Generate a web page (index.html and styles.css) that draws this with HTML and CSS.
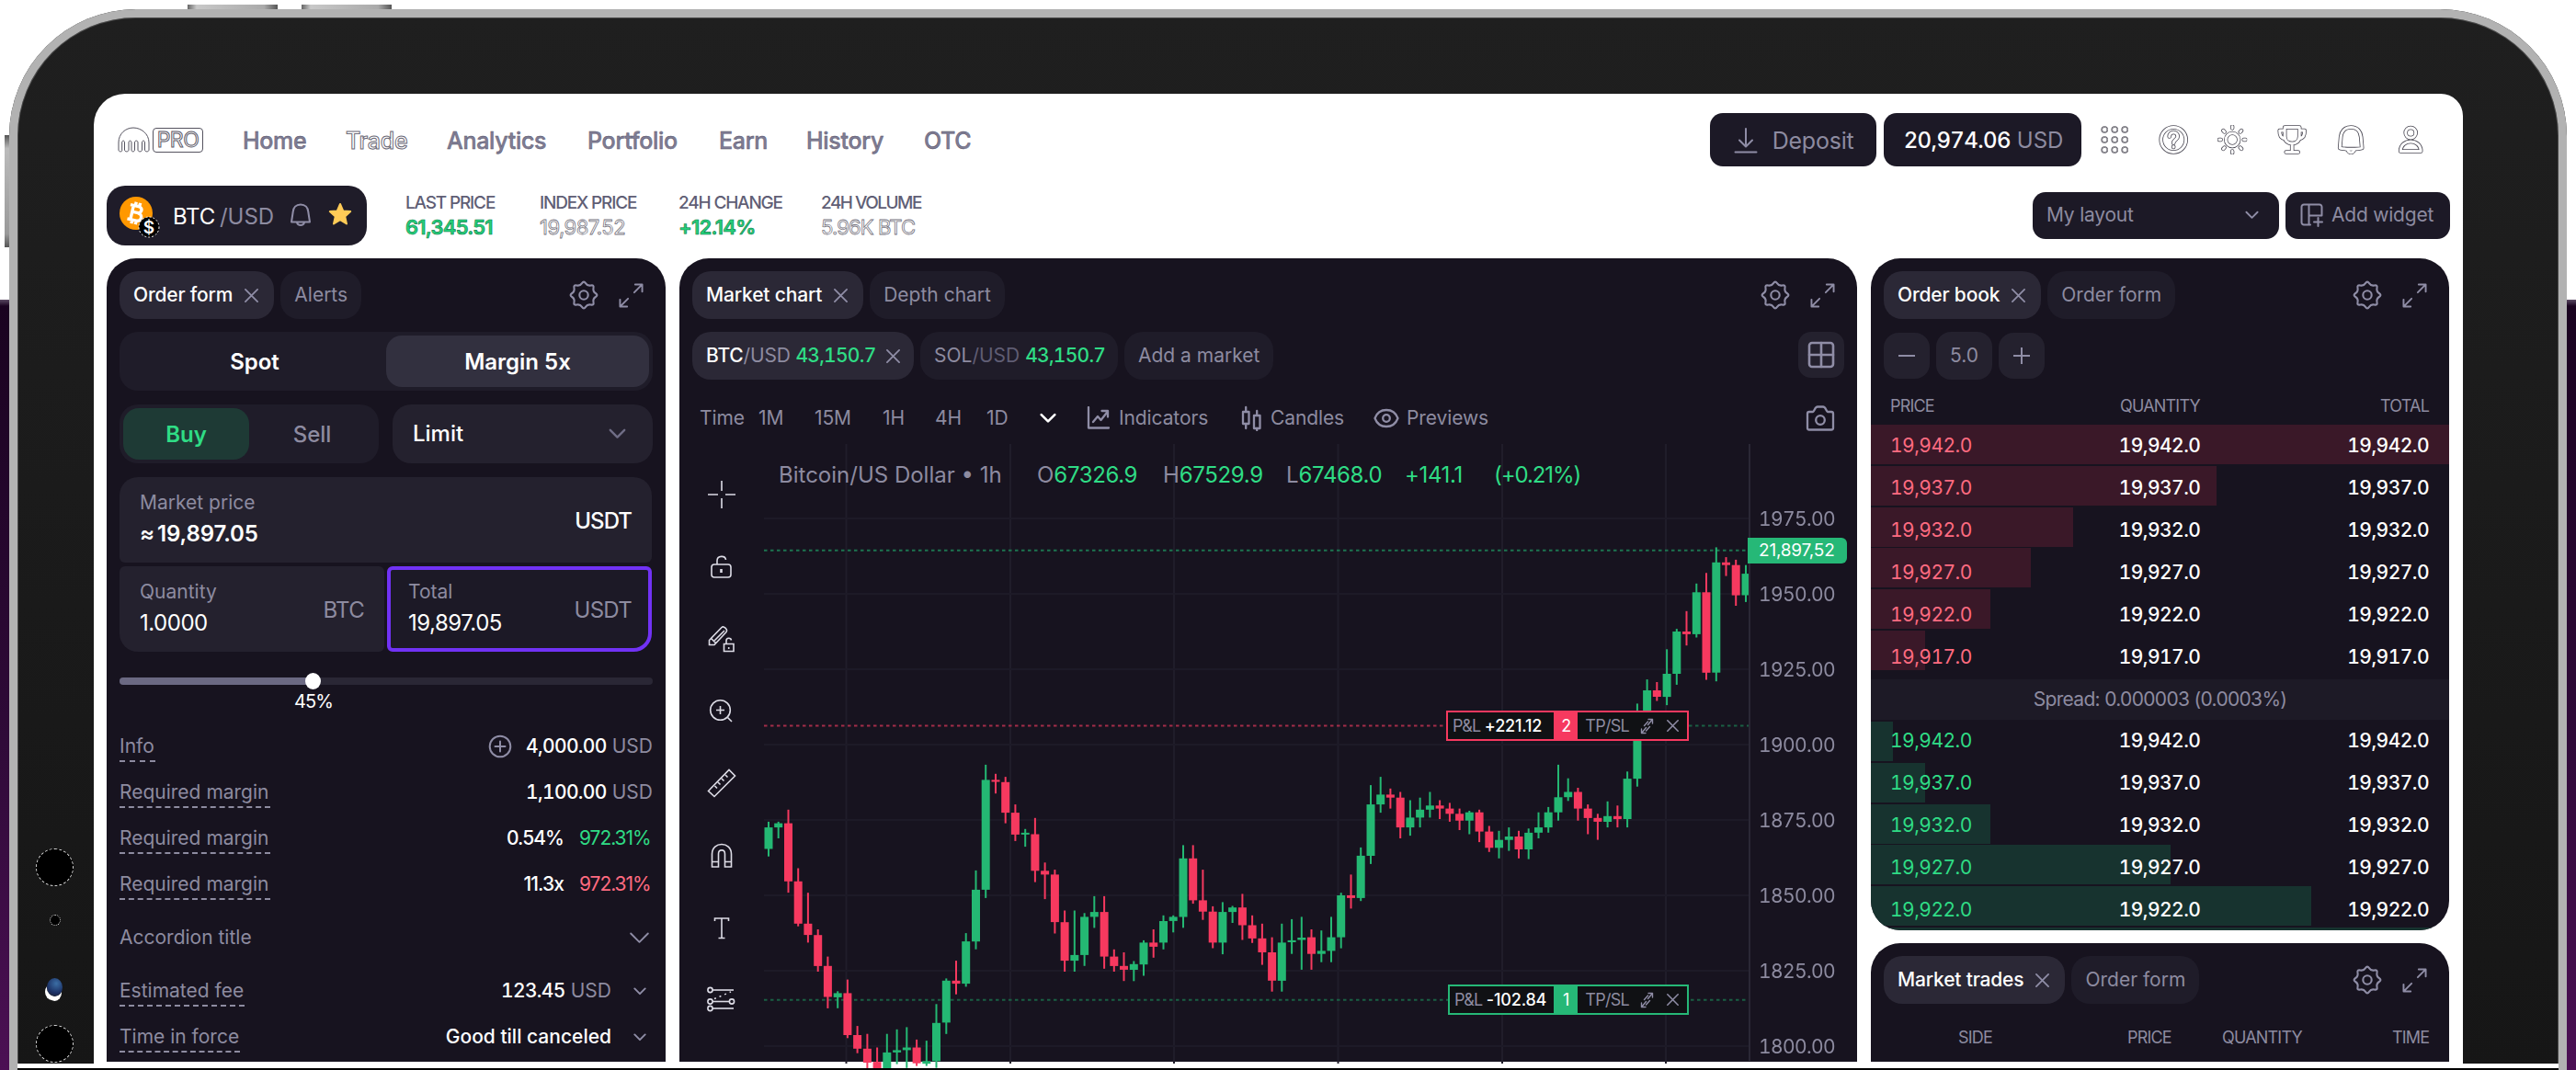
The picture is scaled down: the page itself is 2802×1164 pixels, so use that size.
FILE: index.html
```html
<!DOCTYPE html>
<html lang="en">
<head>
<meta charset="utf-8">
<title>Kraken Pro</title>
<link rel="stylesheet" href="styles.css">
</head>
<body>
<svg class="defs" aria-hidden="true">
  <symbol id="gear" viewBox="0 0 32 32"><path d="M28.85 18Q25.7 20 26.5 23.65Q27.3 27.3 23.65 26.5Q20 25.7 18 28.85Q16 32 14 28.85Q12 25.7 8.35 26.5Q4.7 27.3 5.5 23.65Q6.3 20 3.15 18Q0 16 3.15 14Q6.3 12 5.5 8.35Q4.7 4.7 8.35 5.5Q12 6.3 14 3.15Q16 0 18 3.15Q20 6.3 23.65 5.5Q27.3 4.7 26.5 8.35Q25.7 12 28.85 14Q32 16 28.85 18Z"/><circle cx="16" cy="16" r="4.7"/></symbol>
  <symbol id="expand" viewBox="0 0 28 28"><path d="M17.5 10.5 26 2M18.5 1.5h8v8M10.500 17.500 2 26M1.500 18.500v8h8"/></symbol>
  <symbol id="close" viewBox="0 0 16 16"><path d="M1 1l14 14M15 1 1 15"/></symbol>
  <symbol id="chev" viewBox="0 0 16 10"><path d="M1.500 1.500 8 8l6.500-6.500"/></symbol>
  <symbol id="grid9" viewBox="0 0 32 32"><circle cx="5" cy="5" r="3"/><circle cx="16" cy="5" r="3"/><circle cx="27" cy="5" r="3"/><circle cx="5" cy="16" r="3"/><circle cx="16" cy="16" r="3"/><circle cx="27" cy="16" r="3"/><circle cx="5" cy="27" r="3"/><circle cx="16" cy="27" r="3"/><circle cx="27" cy="27" r="3"/></symbol>
  <symbol id="help" viewBox="0 0 32 32"><circle cx="16" cy="16" r="13.500"/><path d="M11.500 12.500c0-6 9-6 9 0 0 3.500-4.500 3.500-4.500 7"/><path d="M16 23.500v.4"/></symbol>
  <symbol id="sun" viewBox="0 0 34 34"><circle cx="17" cy="17" r="7.500"/><path d="M17 1.800v2M17 30.200v2M1.800 17h2M30.200 17h2M6.500 6.500l1.400 1.400M26.100 26.100l1.400 1.400M6.500 27.500l1.400-1.400M26.100 7.900l1.400-1.400"/></symbol>
  <symbol id="trophy" viewBox="0 0 32 32"><path d="M8 2.500h16v10c0 10-16 10-16 0zM8 6H2.500c0 6 1.500 8 6 9M24 6h5.500c0 6-1.500 8-6 9M16 20.500V29M9.500 29.500h13"/></symbol>
  <symbol id="bellbig" viewBox="0 0 32 32"><path d="M12.500 27c1.500 4 5.500 4 7 0"/><path d="M16 2.500c-7 0-10.500 5-11 10.500L4 25c3 1.500 21 1.500 24 0L27 13c-.500-5.500-4-10.500-11-10.500z"/></symbol>
  <symbol id="user" viewBox="0 0 32 32"><circle cx="16" cy="8.500" r="5.500"/><path d="M5 28.500c0-14 22-14 22 0z"/></symbol>
</svg>

<div class="device">
  <i class="key key-a"></i><i class="key key-b"></i><i class="key key-side"></i>
  <div class="bezel">
    <i class="cam cam-1"></i><i class="cam cam-2"></i><i class="lens"></i><i class="cam cam-3"></i>
    <div class="screen">

      <header class="top">
        <div class="logo">
          <svg width="35" height="28" viewBox="0 0 35 28"><path class="ghost" d="M1 25V17C1 7.500 8.500 1 17 1s17 6.500 17 16v8c0 2.500-4.500 2.500-4.500 0v-8c0-2.500-3-2.500-3 0v8c0 2.500-4.500 2.500-4.500 0v-8c0-2.500-3.500-2.500-3.500 0v8c0 2.500-3.500 2.500-3.500 0v-8c0-2.500-3-2.500-3 0v8c0 2.500-4.500 2.500-4.500 0v-8c0-2.500-2.800-2.500-2.800 0v8C5.500 27.500 1 27.500 1 25z"/></svg>
          <span class="pro outline">PRO</span>
        </div>
        <nav class="nav">
          <a class="n1">Home</a><a class="n2 outline">Trade</a><a class="n3">Analytics</a><a class="n4">Portfolio</a><a class="n5">Earn</a><a class="n6">History</a><a>OTC</a>
        </nav>
        <div class="actions">
          <button class="btn deposit"><svg class="ic" width="26" height="28" viewBox="0 0 26 28"><path d="M13 1v19M6 13.500l7 7 7-7M1.500 26.500h23"/></svg>Deposit</button>
          <button class="btn balance"><b class="num">20,974.06</b> USD</button>
          <div class="icons">
            <svg><use href="#grid9" class="o1 thin"/><use href="#grid9" class="o2 thin2"/></svg>
            <svg><use href="#help" class="o1"/><use href="#help" class="o2"/></svg>
            <svg class="sunny"><use href="#sun" class="o1"/><use href="#sun" class="o2"/></svg>
            <svg><use href="#trophy" class="o1"/><use href="#trophy" class="o2"/></svg>
            <svg><use href="#bellbig" class="o1"/><use href="#bellbig" class="o2"/></svg>
            <svg><use href="#user" class="o1"/><use href="#user" class="o2"/></svg>
          </div>
        </div>
      </header>

      <div class="market">
        <div class="pair">
          <svg class="coin" width="48" height="48" viewBox="0 0 48 48"><circle cx="19" cy="19" r="18" fill="#ff9800"/><g transform="rotate(13 19 19)" fill="none" stroke="#fff" stroke-width="3.400"><path d="M14.500 11v16M11 11.200h9c5.500 0 5.500 7 0 7h-5M11 26.800h10c6 0 6-8.300 0-8.300M16.500 7v4M21 7v4M16.500 27v4M21 27v4"/></g><circle cx="33" cy="34" r="11" fill="#000" stroke="#fff" stroke-width="1" stroke-dasharray="2 2"/><text x="33" y="40.500" text-anchor="middle">$</text></svg>
          <span class="base">BTC</span><span class="quote">/USD</span>
          <svg class="ic bell" width="24" height="26" viewBox="0 0 24 26"><path d="M12 1.500c-5 0-8 3.500-8.300 8L2 20.500h20L20.300 9.500c-.300-4.500-3.300-8-8.300-8zM8 21c1 4 7 4 8 0"/></svg>
          <svg class="star" width="26" height="26" viewBox="0 0 26 26"><path d="M13 2l3.200 7.400 8 .700-6 5.400 1.800 7.900-7-4.200-7 4.200 1.800-7.900-6-5.400 8-.700z" fill="#ffcb57" stroke="#ffcb57" stroke-width="2" stroke-linejoin="round"/></svg>
        </div>
        <dl class="stats">
          <div class="s1"><dt>LAST PRICE</dt><dd class="up">61,345.51</dd></div>
          <div class="s2"><dt>INDEX PRICE</dt><dd class="outline">19,987.52</dd></div>
          <div class="s3"><dt>24H CHANGE</dt><dd class="up">+12.14%</dd></div>
          <div class="s4"><dt>24H VOLUME</dt><dd class="outline">5.96K BTC</dd></div>
        </dl>
        <div class="layouts">
          <button class="btn layout">My layout<svg class="ic" width="15" height="10"><use href="#chev"/></svg></button>
          <button class="btn widget"><svg class="ic" width="26" height="26" viewBox="0 0 26 26"><path d="M11 23.500H4a2.500 2.500 0 0 1-2.500-2.500V4A2.500 2.500 0 0 1 4 1.500h17A2.500 2.500 0 0 1 23.500 4v9.500H9.500M9.500 1.500v22M19.500 16v9M15 20.500h9"/></svg>Add widget</button>
        </div>
      </div>

      <main class="board">
        <section class="panel order">
          <div class="tabs"><span class="tab on">Order form<svg class="ic x"><use href="#close"/></svg></span><span class="tab">Alerts</span><span class="tools"><svg class="ic g"><use href="#gear"/></svg><svg class="ic e"><use href="#expand"/></svg></span></div>
          <div class="seg"><span>Spot</span><span class="on">Margin 5x</span></div>
          <div class="pairrow"><div class="seg side"><span class="buy">Buy</span><span class="sell">Sell</span></div><div class="select">Limit<svg class="ic" width="19" height="12"><use href="#chev"/></svg></div></div>
          <div class="fields">
            <div class="field wide"><div><label>Market price</label><strong>≈ 19,897.05</strong></div><em class="lit">USDT</em></div>
            <div class="field qty"><div><label>Quantity</label><span class="val">1.0000</span></div><em>BTC</em></div>
            <div class="field total"><div><label>Total</label><span class="val">19,897.05</span></div><em>USDT</em></div>
          </div>
          <div class="slider"><i class="fill" style="width:36%"></i><i class="thumb" style="left:36.200%"></i><span class="pct" style="left:36.200%">45%</span></div>
          <ul class="info">
            <li><u>Info</u><span class="v"><svg class="ic plus" width="26" height="26" viewBox="0 0 26 26"><circle cx="13" cy="13" r="11.300"/><path d="M13 7.500v11M7.500 13h11"/></svg><b class="num">4,000.00</b> USD</span></li>
            <li><u>Required margin</u><span class="v"><b class="num">1,100.00</b> USD</span></li>
            <li><u>Required margin</u><span class="v"><b class="pc">0.54%</b><span class="pc green">972.31%</span></span></li>
            <li><u>Required margin</u><span class="v"><b class="pc">11.3x</b><span class="pc red">972.31%</span></span></li>
            <li class="acc">Accordion title<svg class="ic" width="23" height="15"><use href="#chev"/></svg></li>
            <li><u>Estimated fee</u><span class="v sm"><b class="num">123.45</b> USD<svg class="ic" width="14" height="9"><use href="#chev"/></svg></span></li>
            <li><u>Time in force</u><span class="v sm"><b>Good till canceled</b><svg class="ic" width="14" height="9"><use href="#chev"/></svg></span></li>
          </ul>
        </section>

        <section class="panel chartpanel">
          <div class="tabs"><span class="tab on">Market chart<svg class="ic x"><use href="#close"/></svg></span><span class="tab">Depth chart</span><span class="tools"><svg class="ic g"><use href="#gear"/></svg><svg class="ic e"><use href="#expand"/></svg></span></div>
          <div class="tabs second">
            <span class="tab on m1"><span><b>BTC</b>/USD <i class="green num">43,150.7</i></span><svg class="ic x"><use href="#close"/></svg></span>
            <span class="tab m2"><span>SOL<s>/USD</s> <i class="green num">43,150.7</i></span></span>
            <span class="tab m3">Add a market</span>
            <span class="gridbtn"><svg class="ic" width="30" height="30" viewBox="0 0 30 30"><rect x="2" y="2" width="26" height="26" rx="3"/><path d="M15 2v26M2 15h26"/></svg></span>
          </div>
          <div class="bar">
            <span class="t0">Time</span><span class="t1">1M</span><span class="t2">15M</span><span class="t3">1H</span><span class="t4">4H</span><span class="t5">1D</span>
            <svg class="ic white" width="18" height="12"><use href="#chev"/></svg>
            <span class="i1"><svg class="ic" width="26" height="26" viewBox="0 0 26 26"><path d="M2 1v22.500h22M7 17l5-6 3.500 4L23 5.500M16.500 5H23v6.500"/></svg>Indicators</span>
            <span class="i2"><svg class="ic" width="24" height="28" viewBox="0 0 24 28"><rect x="2" y="7" width="6.500" height="13"/><path d="M5.200 2v5M5.200 20v5"/><rect x="14" y="11" width="6.500" height="14"/><path d="M17.200 6v5M17.200 25v2"/></svg>Candles</span>
            <span class="i3"><svg class="ic" width="28" height="22" viewBox="0 0 28 22"><path d="M1.500 11C6-1 22-1 26.500 11 22 23 6 23 1.500 11z"/><circle cx="14" cy="11" r="3.800"/></svg>Previews</span>
            <svg class="ic camera" width="32" height="30" viewBox="0 0 32 30"><path d="M2 10a2 2 0 0 1 2-2h4c2-1 2-5.500 5-5.500h6c3 0 3 4.500 5 5.500h4a2 2 0 0 1 2 2v15.500a2 2 0 0 1-2 2H4a2 2 0 0 1-2-2z"/><circle cx="16" cy="17" r="4.800"/></svg>
          </div>
          <div class="chart">
            <div class="draw">
              <svg width="34" height="34" viewBox="0 0 34 34"><path d="M17 2v11M17 21v11M2 17h11M21 17h11"/></svg>
              <svg width="34" height="34" viewBox="0 0 34 34"><rect x="6" y="14" width="21" height="14" rx="3"/><path d="M12 14v-4c0-6 9-6 9.500-1"/><path d="M16.500 19v4" stroke-width="2.600"/></svg>
              <svg width="34" height="34" viewBox="0 0 34 34"><path d="M3.500 23.500v-5L17 4.500c2-2 7 2 5 5L9 23.500zM6 17l5 5M8 20 20 8M19.500 22.500h10.500v8H19.500zM22 22v-3c0-3.500 5-3.500 5.500-.500M24.700 26v2"/></svg>
              <svg width="34" height="34" viewBox="0 0 34 34"><circle cx="15.500" cy="15.500" r="10.800"/><path d="M23.500 23.500l4.500 4.500M15.500 11v9M11 15.500h9"/></svg>
              <svg width="34" height="34" viewBox="0 0 34 34"><path d="M2.500 25.500 25 2.500l6.500 6.500L9 31.500zM9.500 20l2.500 2.500M13 16l2.500 2.500M17 12l2.500 2.500M21 8l2.500 2.500"/></svg>
              <svg width="34" height="34" viewBox="0 0 34 34"><path d="M6.500 29V15c0-14 21-14 21 0v14h-7V15c0-5.500-7-5.500-7 0v14zM6.500 23.500h7M20.500 23.500h7"/></svg>
              <svg width="34" height="34" viewBox="0 0 34 34"><path d="M9.500 9V6h15v3M17 6v21M13.500 27.500h7"/></svg>
              <svg width="34" height="34" viewBox="0 0 34 34"><circle cx="4.500" cy="6" r="2.600"/><path d="M7 6h23"/><circle cx="4.500" cy="18.500" r="2.600"/><path d="M7 18.500h18"/><circle cx="28" cy="18.500" r="2.600"/><circle cx="4.500" cy="26" r="2.600"/><path d="M7 26h23"/><path d="M9 15.500 27 8" stroke-dasharray="2 4"/></svg>
            </div>
            <svg class="plot" id="plot" width="1072" height="680" viewBox="0 0 1072 680"></svg>
            <ol class="axis"><li>1975.00</li><li>1950.00</li><li>1925.00</li><li>1900.00</li><li>1875.00</li><li>1850.00</li><li>1825.00</li><li>1800.00</li></ol>
            <div class="ohlc"><span class="h0">Bitcoin/US Dollar • 1h</span><span class="h1">O<b>67326.9</b></span><span class="h2">H<b>67529.9</b></span><span class="h3">L<b>67468.0</b></span><span class="h4"><b>+141.1</b></span><span class="h5"><b>(+0.21%)</b></span></div>
            <span class="pricetag">21,897,52</span>
            <div class="pos loss"><span class="pl">P&amp;L <b>+221.12</b></span><span class="cnt">2</span><span class="tp">TP/SL</span><svg class="ic" width="15" height="18" viewBox="0 0 15 18"><path d="M9 1.500h4.500V6M13 2 8.500 7.500M6 16.500H1.500V12M2 16l4.500-5.500M4.500 8.500 8.500 4M6.500 14l4-4.500"/></svg><svg class="ic" width="13" height="13"><use href="#close"/></svg></div>
            <div class="pos gain"><span class="pl">P&amp;L <b>-102.84</b></span><span class="cnt">1</span><span class="tp">TP/SL</span><svg class="ic" width="15" height="18" viewBox="0 0 15 18"><path d="M9 1.500h4.500V6M13 2 8.500 7.500M6 16.500H1.500V12M2 16l4.500-5.500M4.500 8.500 8.500 4M6.500 14l4-4.500"/></svg><svg class="ic" width="13" height="13"><use href="#close"/></svg></div>
          </div>
        </section>

        <div class="right">
          <section class="panel book">
            <div class="tabs"><span class="tab on">Order book<svg class="ic x"><use href="#close"/></svg></span><span class="tab">Order form</span><span class="tools"><svg class="ic g"><use href="#gear"/></svg><svg class="ic e"><use href="#expand"/></svg></span></div>
            <div class="step"><span class="sb"><svg class="ic" width="18" height="18" viewBox="0 0 18 18"><path d="M0 9h18"/></svg></span><span class="sv">5.0</span><span class="sb"><svg class="ic" width="18" height="18" viewBox="0 0 18 18"><path d="M0 9h18M9 0v18"/></svg></span></div>
            <div class="cols"><span>PRICE</span><span>QUANTITY</span><span>TOTAL</span></div>
            <div class="side asks">
              <div class="depth"><i style="width:631px"></i><i style="width:376px"></i><i style="width:220px"></i><i style="width:174px"></i><i style="width:130px"></i><i style="width:59px"></i></div>
              <div class="rows">
                <p><b>19,942.0</b><span>19,942.0</span><span>19,942.0</span></p>
                <p><b>19,937.0</b><span>19,937.0</span><span>19,937.0</span></p>
                <p><b>19,932.0</b><span>19,932.0</span><span>19,932.0</span></p>
                <p><b>19,927.0</b><span>19,927.0</span><span>19,927.0</span></p>
                <p><b>19,922.0</b><span>19,922.0</span><span>19,922.0</span></p>
                <p><b>19,917.0</b><span>19,917.0</span><span>19,917.0</span></p>
              </div>
            </div>
            <div class="spread">Spread: 0.000003 (0.0003%)</div>
            <div class="side bids">
              <div class="depth"><i style="width:24px"></i><i style="width:59px"></i><i style="width:130px"></i><i style="width:326px"></i><i style="width:479px"></i><i style="width:631px"></i></div>
              <div class="rows">
                <p><b>19,942.0</b><span>19,942.0</span><span>19,942.0</span></p>
                <p><b>19,937.0</b><span>19,937.0</span><span>19,937.0</span></p>
                <p><b>19,932.0</b><span>19,932.0</span><span>19,932.0</span></p>
                <p><b>19,927.0</b><span>19,927.0</span><span>19,927.0</span></p>
                <p><b>19,922.0</b><span>19,922.0</span><span>19,922.0</span></p>
              </div>
            </div>
          </section>
          <section class="panel trades">
            <div class="tabs"><span class="tab on">Market trades<svg class="ic x"><use href="#close"/></svg></span><span class="tab">Order form</span><span class="tools"><svg class="ic g"><use href="#gear"/></svg><svg class="ic e"><use href="#expand"/></svg></span></div>
            <div class="tcols"><span>SIDE</span><span>PRICE</span><span>QUANTITY</span><span>TIME</span></div>
          </section>
        </div>
      </main>
    </div>
  </div>
</div>
<div class="edge"></div>
<script src="chart.js"></script>
</body>
</html>
```
FILE: styles.css
```css
* { box-sizing: border-box; }
html { overflow: hidden; }
body {
  margin: 0; width: 2802px; height: 1164px; overflow: hidden; position: relative;
  font: 400 21px/26px Inter, "Liberation Sans", sans-serif; color: #8d8ba0;
  background: linear-gradient(#fff 326px, #5b4a63 326px, #1a0320 333px, #2f0a38 800px, #4c1054 1164px);
}
ul, ol, dl, dd, p { margin: 0; padding: 0; list-style: none; }
b, strong, em, i { font-style: normal; font-weight: 500; }
button { font: inherit; color: inherit; border: 0; }
s, u { text-decoration: none; }
.defs { position: absolute; width: 0; height: 0; }
.ic { fill: none; stroke: #8f8da6; stroke-width: 2; stroke-linecap: round; stroke-linejoin: round; flex: none; }
.ic.white { stroke: #fff; stroke-width: 2.800; }
.green { color: #2fdc85; }
.red { color: #ff6b80; }
.num { letter-spacing: -.035em; font-variant-numeric: tabular-nums; }

/* tablet shell */
.device { position: relative; margin: 0 10px; padding-top: 10px; height: 1164px; }
.key { position: absolute; background: linear-gradient(90deg, #666, #c8c8c8 10%, #aaa 85%, #555); }
.key-a, .key-b { top: 5px; width: 98px; height: 8px; }
.key-a { left: 194px; }
.key-b { left: 318px; }
.key-side { left: -5px; top: 147px; width: 10px; height: 122px; background: linear-gradient(#555, #bbb 12%, #999 88%, #555); }
.bezel {
  position: relative; height: 1154px; padding: 83px 104px 0 83px; background: linear-gradient(#1f1f1f, #161616 1150px);
  border: 9px solid #b2b2b2; border-bottom: 0; border-radius: 138px 138px 0 0; box-shadow: inset 0 0 0 1px #4a4a4a;
  filter: drop-shadow(0 0 .6px #222);
}
.cam, .lens { position: absolute; border-radius: 50%; background: #000; }
.cam { border: 1px dashed #ddd; }
.cam-1 { left: 20px; top: 904px; width: 41px; height: 41px; }
.cam-2 { left: 35px; top: 976px; width: 12px; height: 12px; border-style: dotted; }
.cam-3 { left: 20px; top: 1096px; width: 41px; height: 41px; }
.lens { left: 32px; top: 1045px; width: 17px; height: 20px; background: radial-gradient(circle at 60% 30%, #3b6ea5, #1b2f63 60%, #222); box-shadow: -3px 5px 0 -1px #fff, 0 6px 0 -1px #fff; }
.screen { height: 1062px; background: #fff; border-radius: 34px 24px 0 0; padding: 21px 14px 0; }
.edge { position: absolute; left: 19px; right: 19px; top: 1157px; height: 7px; background: #fff; border-bottom: 2px solid #000; z-index: 2; clip-path: polygon(0 0, 83px 0, 83px 5px, 2660px 5px, 2660px 0, 100% 0, 100% 100%, 0 100%); }

/* header */
.top { display: flex; align-items: center; height: 58px; font-size: 25px; }
.logo { display: flex; width: 148px; padding-left: 12px; gap: 3px; align-items: center; }
.ghost { fill: #fff; stroke: #55535f; stroke-width: 1; }
.outline { color: #fff; -webkit-text-stroke: 1px #5d5b68; }
.pro { border: 1px solid #55535f; border-radius: 4px; height: 27px; width: 55px; font-size: 23px; line-height: 25px; text-align: center; letter-spacing: -.02em; }
.nav { display: flex; font-weight: 500; letter-spacing: -.012em; color: #7f7d94; -webkit-text-stroke: .4px #4d4b62; padding-top: 2px; }
.nav .outline { -webkit-text-stroke: 1px #6d6b78; }
.n1 { width: 112px; } .n2 { width: 110px; } .n3 { width: 153px; } .n4 { width: 143px; } .n5 { width: 95px; } .n6 { width: 128px; }
.actions { margin-left: auto; display: flex; gap: 8px; align-items: center; }
.btn { background: #1c1926; border-radius: 14px; display: flex; align-items: center; white-space: pre; padding: 0; }
.deposit { width: 181px; height: 58px; padding: 2px 0 0 26px; gap: 16px; letter-spacing: -.008em; }
.balance { width: 215px; height: 58px; padding: 2px 0 0 22px; font-size: 24px; }
.balance b { color: #fff; letter-spacing: -.025em; }
.icons { display: flex; gap: 32px; margin: 0 27px 0 12px; }
.icons svg { width: 32.400px; height: 32px; overflow: visible; fill: none; stroke-linecap: round; stroke-linejoin: round; }
.o1 { stroke: #4c4a55; stroke-width: 4.600; }
.o2 { stroke: #fff; stroke-width: 3; }
.thin { stroke-width: 1.600; }
.thin2 { stroke-width: .4; }

/* market strip */
.market { display: flex; height: 65px; margin-top: 21px; align-items: center; }
.pair { display: flex; align-items: center; width: 283px; height: 65px; border-radius: 20px; background: #1f1c29; font-size: 24px; padding: 3px 0 0 13px; }
.coin { margin-top: 2px; }
.coin text { font: 600 19px Inter, sans-serif; fill: #fff; }
.base { color: #fff; margin-left: 11px; letter-spacing: -.01em; }
.quote { margin-left: 5px; width: 76px; }
.bell { margin-top: -4px; }
.star { margin: -6px 0 0 18px; }
.stats { display: flex; margin-left: 42px; }
.stats dt { font: 500 19px/22px Inter, sans-serif; letter-spacing: -.062em; color: #605e75; }
.stats .s4 dt { letter-spacing: -.08em; }
.stats dd { font: 600 22px/26px Inter, sans-serif; letter-spacing: -.035em; margin-top: 2px; }
.stats .outline { font-weight: 400; -webkit-text-stroke: .8px #77757f; letter-spacing: -.025em; }
.stats .s4 .outline { letter-spacing: -.04em; }
.up { color: #24d07a; -webkit-text-stroke: .6px #127a48; }
.s1 { width: 146px; } .s2 { width: 151px; } .s3 { width: 155px; }
.layouts { display: flex; gap: 7px; margin-left: auto; padding-bottom: 1px; }
.layout { width: 268px; height: 51px; padding: 0 22px 0 15px; justify-content: space-between; letter-spacing: -.01em; }
.widget { width: 179px; height: 51px; padding-left: 16px; gap: 8px; letter-spacing: -.01em; }

/* panels */
.board { display: grid; grid-template-columns: 608px 1281px 629px; column-gap: 15px; margin-top: 14px; }
.panel { background: #17131f; border-radius: 32px 32px 0 0; height: 874px; padding: 14px; }
.tabs { display: flex; gap: 7px; height: 52px; }
.tab { display: flex; align-items: center; gap: 14px; padding: 0 15px; border-radius: 20px; background: #1f1c29; white-space: nowrap; }
.tab.on { background: #2b2836; color: #fff; font-weight: 500; gap: 13px; padding-right: 17px; letter-spacing: -.008em; }
.x { width: 15px; height: 15px; stroke-width: 1.900; }
.tools { margin-left: auto; display: flex; align-items: center; gap: 21px; padding-right: 10px; }
.g { width: 32px; height: 32px; stroke-width: 2.100; }
.e { width: 27px; height: 27px; margin-left: 1px; }
.seg { display: flex; height: 64px; margin-top: 14px; border-radius: 20px; background: #1f1c29; padding: 4px; color: #fff; font: 600 24px/58px Inter, sans-serif; text-align: center; }
.seg span { flex: 1; border-radius: 17px; }
.seg .on { background: #32303f; }
.pairrow { display: flex; gap: 15px; margin-top: 15px; }
.side.seg { width: 282px; margin: 0; }
.seg .buy { background: #1e3a35; color: #2fdc85; }
.seg .sell { color: #8d8ba0; font-weight: 500; }
.select { flex: 1; display: flex; align-items: center; justify-content: space-between; padding: 0 29px 0 22px; background: #24212e; border-radius: 20px; color: #fff; font: 500 24px/30px Inter, sans-serif; }
.select .ic { stroke: #6f6d86; }
.fields { display: grid; grid-template-columns: 288px 288px; gap: 4px 3px; margin-top: 15px; }
.field { height: 93px; background: #24212e; display: flex; justify-content: space-between; align-items: center; padding: 2px 22px 0; }
.field label { display: block; line-height: 24px; }
.field strong, .val { display: block; font-size: 24px; line-height: 34px; margin-top: 5px; color: #fff; letter-spacing: -.02em; }
.field strong { font-weight: 600; letter-spacing: -.005em; word-spacing: -3px; }
.field em { font-size: 24px; font-weight: 400; letter-spacing: -.03em; }
.field .lit { color: #fff; font-weight: 500; letter-spacing: -.04em; }
.wide { grid-column: 1 / 3; border-radius: 20px 20px 6px 6px; }
.qty { border-radius: 6px 6px 6px 20px; }
.total { border: 4px solid #7132f5; background: #1c1926; border-radius: 6px 6px 20px 6px; padding: 2px 18px 0 19px; }
.slider { position: relative; height: 8px; margin-top: 28px; border-radius: 4px; background: #2a2735; }
.slider i { position: absolute; }
.fill { left: 0; top: 0; height: 8px; border-radius: 4px; background: #6b6982; }
.thumb { top: -5px; width: 17px; height: 18px; margin-left: -8px; border-radius: 50%; background: #fff; }
.pct { position: absolute; top: 13px; width: 60px; margin-left: -29px; text-align: center; font-size: 20px; color: #fff; letter-spacing: -.05em; }
.info { margin-top: 42px; }
.info li { display: flex; justify-content: space-between; height: 50px; align-items: flex-start; padding-top: 12px; }
.info u { border-bottom: 2px dashed #8d8ba0; height: 30px; padding-right: 1px; white-space: nowrap; }
.info .v { white-space: pre; display: flex; align-items: center; height: 26px; }
.info b { color: #fff; }
.info .num { letter-spacing: -.03em; }
.plus { margin-right: 15px; }
.pc { letter-spacing: -.05em; }
.pc + .pc { margin-left: 17px; width: 80px; }
b.pc { letter-spacing: -.045em; }
.info .acc { height: 66px; padding: 0; align-items: center; }
.acc .ic { margin-right: 3px; stroke-width: 1.300; }
.info .sm .ic { margin: 0 7px 0 24px; stroke-width: 2.200; }

/* chart */
.second { margin-top: 14px; color: #8d8ba0; }
.second .tab.on { color: #8d8ba0; font-weight: 400; gap: 11px; }
.second b { color: #fff; }
.second s { color: #5f5d74; }
.m1 { width: 241px; } .m2 { width: 215px; } .m3 { width: 162px; }
.gridbtn { margin-left: auto; width: 50px; height: 50px; border-radius: 14px; background: #24212e; display: flex; align-items: center; justify-content: center; }
.gridbtn .ic { stroke-width: 2.600; }
.bar { display: flex; align-items: center; height: 40px; margin-top: 22px; padding-left: 8px; }
.t0 { width: 64px; } .t1 { width: 61px; } .t2 { width: 74px; } .t3 { width: 57px; } .t4 { width: 56px; } .t5 { width: 58px; }
.bar .ic.white { margin-right: 33px; }
.bar span { letter-spacing: -.005em; white-space: nowrap; }
.bar .ic { stroke-width: 2.300; }
.i1, .i2, .i3 { display: flex; align-items: center; }
.i1 { width: 168px; gap: 9px; } .i2 { width: 144px; gap: 8px; } .i3 { gap: 8px; }
.camera { margin-left: auto; margin-right: 10px; }
.chart { position: relative; display: flex; height: 680px; margin: 8px -14px 0; }
.draw { width: 92px; display: flex; flex-direction: column; gap: 44.600px; padding: 38px 0 0 29px; }
.draw svg { fill: none; stroke: #dddce6; stroke-width: 1.600; flex: none; }
.plot { flex: none; overflow: hidden; }
.axis { border-left: 2px solid #2a2735; width: 117px; height: 671px; margin-left: -1px; padding: 70px 0 0 9px; }
.axis li { height: 82px; line-height: 24px; font-size: 21px; letter-spacing: -.03em; font-variant-numeric: tabular-nums; }
.ohlc { position: absolute; left: 108px; top: 19px; display: flex; font-size: 24px; line-height: 30px; white-space: nowrap; }
.ohlc b { color: #2fdc85; font-weight: 400; letter-spacing: -.015em; }
.h0 { width: 281px; } .h1 { width: 137px; } .h2 { width: 134px; } .h3 { width: 129px; } .h4 { width: 97px; }
.ohlc .h5 b { letter-spacing: -.045em; }
.pricetag { position: absolute; left: 1162px; top: 102px; width: 108px; height: 28px; border-radius: 0 6px 6px 0; background: #26b877; color: #fff; font-size: 19px; line-height: 28px; padding-left: 12px; letter-spacing: -.01em; }
.pos { position: absolute; height: 33px; border: 2px solid #f6395f; background: #101114; display: flex; align-items: center; font-size: 18px; white-space: nowrap; letter-spacing: -.04em; }
.pos b { color: #fff; letter-spacing: -.01em; }
.pl { padding-left: 5px; flex: 1; }
.cnt { width: 26px; height: 33px; line-height: 33px; text-align: center; color: #fff; background: #f6395f; }
.tp { padding: 0 12px 0 8px; }
.pos .ic { margin-right: 8px; stroke-width: 1.400; }
.pos .ic + .ic { margin: 0 9px 0 6px; stroke-width: 1.900; }
.loss { left: 834px; top: 290px; width: 264px; }
.gain { left: 836px; top: 588px; width: 262px; border-color: #26b877; }
.gain .cnt { background: #26b877; }

/* order book */
.right { display: grid; grid-template-rows: 731px 129px; row-gap: 14px; }
.book { height: 731px; border-radius: 32px; padding: 14px 0 0; overflow: hidden; }
.book .tabs, .step { padding-left: 14px; }
.book .tabs { padding-right: 14px; }
.step { display: flex; gap: 7px; margin-top: 14px; align-items: center; height: 52px; }
.step span { display: flex; align-items: center; justify-content: center; background: #24212e; border-radius: 16px; height: 50px; width: 50px; }
.step .sv { width: 61px; height: 52px; }
.cols { display: flex; font-size: 18px; letter-spacing: -.045em; height: 49px; padding: 16px 22px 0 21px; }
.cols span { width: 250px; }
.cols span:last-child { width: auto; margin-left: auto; }
.side { position: relative; }
.asks { height: 277px; }
.depth { position: absolute; inset: 0; display: grid; grid-auto-rows: 43px; row-gap: 1.750px; align-content: start; }
.depth i { background: #3a1828; }
.bids .depth { top: 2px; height: 270px; overflow: hidden; }
.bids .depth i { background: #17332f; }
.rows { position: relative; color: #fff; }
.rows p { display: flex; height: 46.100px; line-height: 45px; padding: 0 22px 0 21px; letter-spacing: -.025em; font-variant-numeric: tabular-nums; }
.rows p > * { width: 250px; }
.rows p > :last-child { width: auto; margin-left: auto; }
.rows b { color: #ff6b80; font-weight: 400; }
.rows span { font-weight: 450; }
.bids b { color: #2fdc85; }
.spread { height: 44px; line-height: 44px; text-align: center; background: #1d1a26; letter-spacing: -.032em; }
.trades { height: 129px; }
.tcols { display: flex; font-size: 18px; letter-spacing: -.045em; padding: 24px 0 0 81px; }
.tcols span:nth-child(1) { width: 184px; }
.tcols span:nth-child(2) { width: 103px; }
.tcols span:nth-child(3) { width: 185px; }
```
FILE: chart.js
```js
// Each candle: [up, high, bodyTop, bodyBottom, low] measured in eighths of a price point below 1988.75.
const candles = [
[1,913,928,985,1005],[1,913,917,928,957],[0,881,917,1071,1101],[0,1036,1071,1183,1190],[0,1101,1183,1213,1233],
[0,1198,1213,1295,1310],[0,1270,1295,1377,1407],[1,1362,1367,1378,1407],[0,1331,1367,1478,1486],[0,1454,1478,1514,1526],
[0,1475,1514,1551,1568],[0,1511,1549,1590,1600],[1,1475,1524,1590,1600],[1,1463,1518,1524,1555],[1,1457,1511,1518,1565],
[0,1490,1511,1553,1560],[1,1493,1547,1554,1560],[1,1396,1446,1547,1565],[1,1328,1334,1445,1475],[0,1281,1334,1342,1370],
[1,1208,1230,1342,1350],[1,1042,1093,1230,1251],[1,762,802,1093,1115],[0,786,802,807,838],[0,794,808,889,917],
[0,867,889,947,964],[1,932,942,945,979],[0,903,946,1043,1073],[0,1021,1043,1053,1118],[0,1040,1053,1179,1209],
[0,1148,1179,1281,1310],[1,1148,1266,1281,1310],[1,1155,1165,1266,1295],[1,1110,1152,1165,1194],[0,1110,1152,1270,1302],
[0,1251,1270,1295,1310],[0,1259,1295,1305,1335],[1,1282,1290,1305,1335],[1,1227,1233,1291,1321],[0,1198,1233,1244,1273],
[1,1161,1176,1233,1251],[1,1161,1165,1176,1206],[1,975,1010,1165,1194],[0,975,1010,1121,1130],[0,1040,1121,1151,1173],
[0,1137,1151,1233,1248],[1,1126,1152,1233,1264],[1,1136,1140,1152,1181],[0,1104,1140,1187,1226],[0,1161,1187,1222,1234],
[0,1183,1222,1259,1292],[0,1219,1259,1334,1363],[1,1183,1233,1334,1363],[1,1171,1227,1232,1263],[1,1165,1220,1226,1305],
[0,1198,1219,1263,1305],[1,1201,1255,1263,1285],[1,1165,1219,1255,1285],[1,1101,1108,1219,1248],[0,1053,1108,1115,1143],
[1,981,1003,1115,1123],[1,816,867,1003,1025],[1,794,841,867,889],[0,825,841,849,878],[0,834,849,928,957],
[1,856,902,928,950],[1,849,881,902,928],[1,834,870,881,902],[0,856,870,878,906],[0,863,878,892,913],
[0,878,892,910,935],[1,884,888,910,946],[0,881,888,939,967],[0,924,939,982,993],[1,937,961,982,1010],
[1,928,952,961,990],[0,937,952,986,1010],[1,931,942,986,1012],[1,888,928,942,957],[1,874,888,928,942],
[1,762,848,888,910],[1,798,834,848,858],[0,823,834,878,910],[0,867,878,903,946],[0,892,903,913,961],
[1,859,898,913,928],[0,870,898,906,928],[1,780,799,906,928],[1,600,655,799,820],[1,536,565,655,670],
[0,543,565,582,593],[1,456,521,582,604],[1,402,409,521,550],[0,355,409,416,446],[1,282,305,416,425],
[0,254,305,518,537],[1,186,226,518,541],[0,212,226,233,262],[0,219,233,313,341],[1,233,256,313,331]
];
const UNIT = 1 / 2.435, TOP = 36, STEP = 10.737;
const y = v => (TOP + v * UNIT).toFixed(1);
let out = '';
[89.5, 268, 446, 624.5, 803, 981].forEach(x => { out += `<rect x="${x - 1}" y="0" width="2" height="674" fill="#201d2a"/>`; });
for (let i = 0; i < 8; i++) out += `<rect x="0" y="${80 + i * 82}" width="1072" height="2" fill="#1d1a27"/>`;
const dash = (x1, x2, yy, c) => { out += `<path d="M${x1} ${yy}H${x2}" stroke="${c}" stroke-width="2" stroke-dasharray="3.5 3.5"/>`; };
dash(0, 1072, 115.7, '#1c7550');
dash(0, 742, 306.6, '#a32d49');
dash(1006, 1072, 306.6, '#1a6044');
dash(0, 1072, 604.8, '#1a6044');
candles.forEach(([up, h, a, b, l], i) => {
  const x = 5 + i * STEP, c = up ? '#24b873' : '#f6395f';
  out += `<rect x="${(x - 1).toFixed(1)}" y="${y(h)}" width="2" height="${((l - h) * UNIT).toFixed(1)}" fill="${c}"/>`;
  out += `<rect x="${(x - 4.5).toFixed(1)}" y="${y(a)}" width="9" height="${Math.max(2, (b - a) * UNIT).toFixed(1)}" fill="${c}"/>`;
});
document.getElementById('plot').innerHTML = out;
```
